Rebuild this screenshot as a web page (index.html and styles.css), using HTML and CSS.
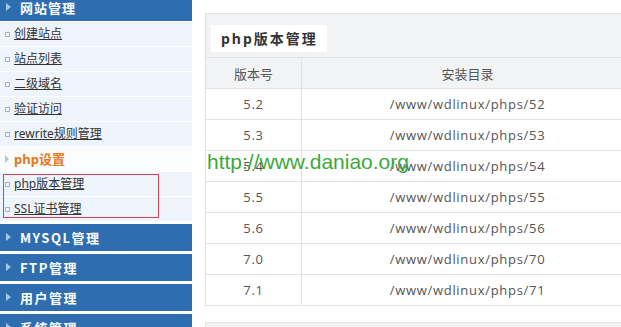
FILE: index.html
```html
<!DOCTYPE html>
<html lang="zh-CN">
<head>
  <meta charset="UTF-8">
  <title>php版本管理</title>
  <link rel="stylesheet" href="styles.css">
</head>
<body>
  <div class="layout">
    <!-- 左侧菜单 -->
    <aside class="sidebar">
      <div class="menu-head">网站管理</div>
      <ul class="menu-list">
        <li><a href="#">创建站点</a></li>
        <li><a href="#">站点列表</a></li>
        <li><a href="#">二级域名</a></li>
        <li><a href="#">验证访问</a></li>
        <li><a href="#">rewrite规则管理</a></li>
        <li class="group">php设置</li>
        <li><a href="#">php版本管理</a></li>
        <li><a href="#">SSL证书管理</a></li>
      </ul>
      <div class="menu-head wide">MYSQL管理</div>
      <div class="menu-head wide">FTP管理</div>
      <div class="menu-head wide">用户管理</div>
      <div class="menu-head wide">系统管理</div>
      <div class="mark-box"></div>
    </aside>

    <!-- 内容 -->
    <main class="main">
      <section class="panel">
        <div class="panel-title">php版本管理</div>
        <table class="grid">
          <thead>
            <tr><th class="col-ver">版本号</th><th>安装目录</th></tr>
          </thead>
          <tbody>
            <tr><td>5.2</td><td>/www/wdlinux/phps/52</td></tr>
            <tr><td>5.3</td><td>/www/wdlinux/phps/53</td></tr>
            <tr><td>5.4</td><td>/www/wdlinux/phps/54</td></tr>
            <tr><td>5.5</td><td>/www/wdlinux/phps/55</td></tr>
            <tr><td>5.6</td><td>/www/wdlinux/phps/56</td></tr>
            <tr><td>7.0</td><td>/www/wdlinux/phps/70</td></tr>
            <tr><td>7.1</td><td>/www/wdlinux/phps/71</td></tr>
          </tbody>
        </table>
      </section>
      <section class="panel next"></section>
    </main>
  </div>
  <div class="watermark">http://www.daniao.org</div>
</body>
</html>
```

FILE: styles.css
```css
body {
  margin: 0;
  width: 621px;
  height: 327px;
  overflow: hidden;
  position: relative;
  background: #ffffff;
  font-family: "Noto Sans", "Noto Sans CJK SC", sans-serif;
  color: #333333;
}
.layout {
  display: flex;
  align-items: flex-start;
}
.sidebar {
  width: 192px;
  flex: none;
  margin-top: -6px;
}
.menu-head {
  position: relative;
  height: 27px;
  line-height: 27px;
  padding-left: 20px;
  background: #2e6db0;
  color: #ffffff;
  font-family: "Noto Sans CJK SC", sans-serif;
  font-size: 13px;
  font-weight: bold;
  letter-spacing: 1px;
  margin-bottom: 3px;
}
.menu-head::before {
  content: "";
  position: absolute;
  left: 6px;
  top: 9px;
  border-left: 5px solid #9fc6ee;
  border-top: 4px solid transparent;
  border-bottom: 4px solid transparent;
}
.menu-head.wide {
  letter-spacing: 1.5px;
}
.menu-list {
  list-style: none;
  margin: -2px 0 2px;
  padding: 0;
}
.menu-list li {
  position: relative;
  height: 24px;
  line-height: 24px;
  padding-left: 14px;
  background: #eef4fb;
  border-bottom: 1px solid #ffffff;
  font-size: 12px;
}
.menu-list li::before {
  content: "";
  position: absolute;
  left: 5px;
  top: 10px;
  width: 3px;
  height: 3px;
  border: 1px solid #a8b4c2;
}
.menu-list a {
  color: #333333;
  font-family: "Noto Sans", "Noto Sans CJK SC", sans-serif;
}
.menu-list li.group {
  background: #fbfcfe;
  color: #e8761a;
  font-weight: bold;
  font-size: 13px;
}
.menu-list li.group::before {
  border: none;
  width: 0;
  height: 0;
  top: 8px;
  border-left: 4px solid #b9c3cf;
  border-top: 4px solid transparent;
  border-bottom: 4px solid transparent;
}
.mark-box {
  position: absolute;
  left: 3px;
  top: 174px;
  width: 154px;
  height: 42px;
  border: 1px solid #d4414f;
}
.main {
  padding: 13px 0 0 13px;
}
.panel {
  width: 427px;
  background: #f2f3f5;
  border: 1px solid #e2e2e2;
  padding-top: 11px;
}
.panel.next {
  margin-top: 16px;
  height: 30px;
  padding: 0;
}
.panel-title {
  display: inline-block;
  margin-left: 5px;
  margin-bottom: 5px;
  height: 27px;
  line-height: 27px;
  padding: 0 9px 0 10px;
  background: #ffffff;
  font-family: "Noto Sans", "Noto Sans CJK SC", sans-serif;
  font-size: 14px;
  font-weight: bold;
  letter-spacing: 2px;
  color: #333333;
}
.grid {
  width: 100%;
  border-collapse: collapse;
  font-family: "Open Sans", "Noto Sans CJK SC", sans-serif;
  font-size: 13px;
  color: #555555;
}
.grid th, .grid td {
  height: 30px;
  padding: 0;
  text-align: center;
  border-top: 1px solid #e3e3e3;
}
.grid th + th, .grid td + td {
  border-left: 1px solid #e3e3e3;
}
.grid th {
  font-weight: normal;
  background: #f2f3f5;
  font-family: "Noto Sans CJK SC", sans-serif;
}
.grid td {
  background: #ffffff;
  letter-spacing: 0.7px;
}
.col-ver {
  width: 95px;
}
.watermark {
  position: absolute;
  left: 207px;
  top: 151px;
  font-family: "Liberation Sans", Arial, sans-serif;
  font-size: 21px;
  line-height: 21px;
  color: #3ca83c;
}
```
